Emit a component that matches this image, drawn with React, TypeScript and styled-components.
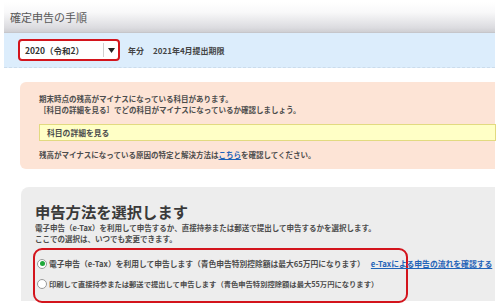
import React from "react";
import styled, { createGlobalStyle } from "styled-components";

const GlobalStyle = createGlobalStyle`
  html, body { margin: 0; padding: 0; background: #ffffff; overflow: hidden; }
  body { font-family: "Noto Sans CJK JP", "Noto Sans", sans-serif; color: #484848; }
  * { box-sizing: border-box; }
`;

const Page = styled.div`
  width: 500px;
  height: 308px;
  padding: 2px 5px 0 4px;
`;

const Header = styled.div`
  height: 31px;
  display: flex;
  align-items: center;
  padding-left: 6px;
  font-size: 11px;
  color: #585858;
  background: linear-gradient(#ffffff 0%, #f8f8f9 35%, #dcdce0 85%, #cfcfd3 100%);
  border-bottom: 1px solid #c6c6ca;
`;

const YearBar = styled.div`
  height: 35px;
  display: flex;
  align-items: center;
  padding-left: 14px;
  background: #dcedfc;
  border-bottom: 1px dashed #cbdcec;
`;

const SelectBox = styled.div`
  width: 102px;
  height: 22px;
  display: flex;
  align-items: center;
  background: #ffffff;
  border: 2px solid #d3141c;
  border-radius: 4px;
`;

const SelectValue = styled.span`
  flex: 1;
  padding-left: 5px;
  font-size: 8.5px;
  font-weight: 700;
  color: #333;
  white-space: nowrap;
`;

const SelectArrow = styled.span`
  width: 15px;
  height: 14px;
  display: flex;
  align-items: center;
  justify-content: center;
  border-left: 1px solid #cfcfcf;
`;

const YearLabel = styled.span<{ $gap?: number }>`
  margin-left: ${(p) => p.$gap ?? 8}px;
  font-size: 8px;
  font-weight: 700;
  color: #444;
  white-space: nowrap;
`;

const Notice = styled.div`
  margin: 14px 0 0 16px;
  padding: 11px 0 9px 19px;
  background: #fde4d6;
  border-radius: 6px 0 0 6px;
`;

const NoticeText = styled.p<{ $top?: number }>`
  margin: ${(p) => p.$top ?? 0}px 0 0 0;
  font-size: 7.5px;
  line-height: 11px;
  font-weight: 700;
  color: #4c4c4c;
  white-space: nowrap;
`;

const DetailButton = styled.div`
  margin: 9px -1px 0 0;
  height: 17px;
  display: flex;
  align-items: center;
  padding-left: 7px;
  background: #ffffc6;
  border: 1px solid #e2da80;
  font-size: 7.8px;
  font-weight: 700;
  color: #4c4c4c;
`;

const Link = styled.a`
  color: #1f63b8;
  text-decoration: underline;
`;

const Method = styled.div`
  margin: 18px 0 0 17px;
  height: 114px;
  padding: 14px 0 0 14px;
  background: #ededed;
  border-radius: 8px 0 0 0;
`;

const MethodTitle = styled.h2`
  margin: 0;
  font-size: 15.3px;
  line-height: 20px;
  font-weight: 700;
  color: #3a3a3a;
  white-space: nowrap;
`;

const MethodText = styled.p<{ $top?: number }>`
  margin: ${(p) => p.$top ?? 0}px 0 0 0;
  font-size: 7.5px;
  line-height: 10.5px;
  font-weight: 700;
  color: #4c4c4c;
  white-space: nowrap;
`;

const Choices = styled.div`
  margin: 4px 0 0 -2px;
  width: 375px;
  height: 55px;
  padding: 8px 0 0 2px;
  display: flex;
  flex-direction: column;
  gap: 9px;
  border: 2px solid #d3141c;
  border-radius: 9px;
`;

const ChoiceRow = styled.label<{ $size: number }>`
  display: flex;
  align-items: center;
  gap: 2px;
  height: 11px;
  font-size: ${(p) => p.$size}px;
  font-weight: 700;
  color: #4c4c4c;
  white-space: nowrap;
`;

const Radio = styled.span<{ $checked?: boolean }>`
  width: 10px;
  height: 10px;
  flex: none;
  border-radius: 50%;
  border: 1px solid #9a9a9a;
  background: #ffffff;
  display: flex;
  align-items: center;
  justify-content: center;
  &::after {
    content: "";
    width: 5px;
    height: 5px;
    border-radius: 50%;
    background: ${(p) => (p.$checked ? "#1ea83a" : "transparent")};
  }
`;

const ChoiceLink = styled(Link)`
  margin-left: 4px;
  font-size: 7.8px;
`;

export default function App() {
  return (
    <>
      <GlobalStyle />
      <Page>
        <Header>確定申告の手順</Header>
        <YearBar>
          <SelectBox>
            <SelectValue>2020（令和2）</SelectValue>
            <SelectArrow>
              <svg width="7" height="5" viewBox="0 0 7 5">
                <path d="M0 0 H7 L3.5 5 Z" fill="#222" />
              </svg>
            </SelectArrow>
          </SelectBox>
          <YearLabel $gap={8}>年分</YearLabel>
          <YearLabel $gap={9}>2021年4月提出期限</YearLabel>
        </YearBar>
        <Notice>
          <NoticeText>期末時点の残高がマイナスになっている科目があります。</NoticeText>
          <NoticeText>［科目の詳細を見る］でどの科目がマイナスになっているか確認しましょう。</NoticeText>
          <DetailButton>科目の詳細を見る</DetailButton>
          <NoticeText $top={8}>
            残高がマイナスになっている原因の特定と解決方法は<Link>こちら</Link>を確認してください。
          </NoticeText>
        </Notice>
        <Method>
          <MethodTitle>申告方法を選択します</MethodTitle>
          <MethodText $top={2}>
            電子申告（e-Tax）を利用して申告するか、直接持参または郵送で提出して申告するかを選択します。
          </MethodText>
          <MethodText>ここでの選択は、いつでも変更できます。</MethodText>
          <Choices>
            <ChoiceRow $size={7.75}>
              <Radio $checked />
              電子申告（e-Tax）を利用して申告します（青色申告特別控除額は最大65万円になります）
              <ChoiceLink>e-Taxによる申告の流れを確認する</ChoiceLink>
            </ChoiceRow>
            <ChoiceRow $size={7.3}>
              <Radio />
              印刷して直接持参または郵送で提出して申告します（青色申告特別控除額は最大55万円になります）
            </ChoiceRow>
          </Choices>
        </Method>
      </Page>
    </>
  );
}
